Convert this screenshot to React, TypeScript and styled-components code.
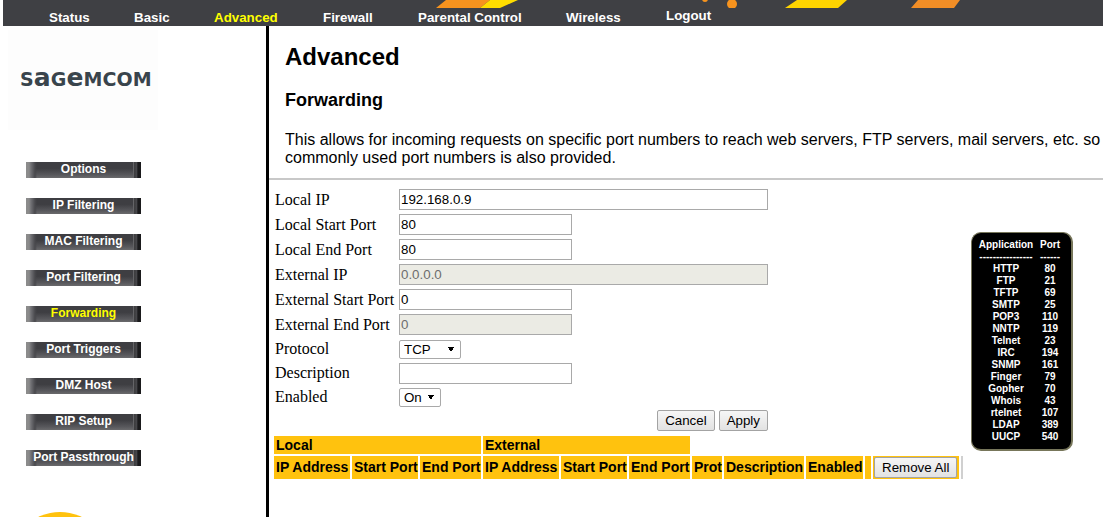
import React from "react";
import styled, { createGlobalStyle } from "styled-components";

const GlobalStyle = createGlobalStyle`
  html, body {
    margin: 0;
    padding: 0;
    background: #fff;
    overflow: hidden;
  }
`;

const Page = styled.div`
  width: 1103px;
  height: 517px;
  overflow: hidden;
  font-family: "Liberation Sans", Arial, sans-serif;
`;

const Header = styled.div`
  margin-left: 3px;
  height: 26px;
  background: #3f4044;
`;

const Banner = styled.svg`
  display: block;
  width: 1100px;
  height: 8px;
`;

const Nav = styled.nav`
  display: flex;
  height: 18px;
  padding-left: 46px;
`;

const NavItem = styled.a<{ $w: number; $active?: boolean; $raised?: boolean }>`
  width: ${(p) => p.$w}px;
  flex: none;
  font-size: 13.33px;
  font-weight: bold;
  line-height: 18px;
  white-space: nowrap;
  color: ${(p) => (p.$active ? "#ffff00" : "#fff")};
  padding-top: ${(p) => (p.$raised ? "0" : "1px")};
  margin-top: ${(p) => (p.$raised ? "-1px" : "0")};
`;

const Body = styled.div`
  display: flex;
  height: 491px;
`;

const Sidebar = styled.aside`
  width: 266px;
  flex: none;
  overflow: hidden;
  border-right: 3px solid #000;
`;

const LogoBox = styled.div`
  margin: 4px 0 0 8px;
  width: 150px;
  height: 100px;
  background: #fdfdfd;
  display: flex;
  align-items: center;
  padding-left: 12px;
  box-sizing: border-box;
`;

const LogoText = styled.div`
  font-family: "DejaVu Sans", sans-serif;
  font-size: 19px;
  font-weight: bold;
  line-height: 22px;
  color: #39444c;
  white-space: nowrap;
  margin-top: -2px;
  letter-spacing: 0.1px;
`;

const LogoLower = styled.span`
  font-size: 25px;
  line-height: 0;
`;

const Menu = styled.ul`
  list-style: none;
  margin: 32px 0 0 26px;
  padding: 0;
  display: flex;
  flex-direction: column;
  gap: 20px;
`;

const MenuButton = styled.li<{ $active?: boolean }>`
  width: 115px;
  height: 16px;
  font-size: 12px;
  font-weight: bold;
  line-height: 15px;
  text-align: center;
  white-space: nowrap;
  color: ${(p) => (p.$active ? "#ffff00" : "#fff")};
  background:
    linear-gradient(90deg, #8c8c8c 0, #8a8a8a 3px, #707074 5px, #48484c 9px, transparent 11px) left / 12px 100% no-repeat,
    linear-gradient(90deg, #77777a 0, #2b2b2d 2px, #56565a 3px, #1a1a1c 5px) right / 8px 100% no-repeat,
    linear-gradient(180deg, #3e3e42 0, #3e3e42 40%, #58585c 80%, #6a6a6c 100%);
`;

const Sun = styled.svg`
  display: block;
  margin: 46px 0 0 26px;
  width: 68px;
  height: 6px;
`;

const Main = styled.main`
  flex: 1;
  min-width: 0;
  overflow: hidden;
`;

const Intro = styled.div`
  padding: 17px 0 0 16px;
`;

const H1 = styled.h1`
  margin: 0;
  font-size: 24px;
  font-weight: bold;
  line-height: 28px;
  color: #000;
`;

const H2 = styled.h2`
  margin: 19px 0 0;
  font-size: 18px;
  font-weight: bold;
  line-height: 21px;
  color: #000;
`;

const Para = styled.p`
  margin: 20px 0 0;
  width: 1300px;
  font-size: 16px;
  line-height: 18px;
  color: #000;
`;

const Rule = styled.hr`
  margin: 11px 0 0;
  height: 2px;
  border: 0;
  background: #c8c8c8;
`;

const Workspace = styled.div`
  display: flex;
  align-items: flex-start;
  padding-left: 3px;
`;

const LeftColumn = styled.div`
  width: 699px;
  flex: none;
`;

const Form = styled.form`
  width: 493px;
  padding: 7px 0 0 3px;
`;

const Row = styled.div<{ $h?: number }>`
  display: grid;
  grid-template-columns: 124px 1fr;
  align-items: center;
  height: ${(p) => p.$h ?? 25}px;
`;

const Label = styled.label`
  font-family: "Liberation Serif", "Times New Roman", serif;
  font-size: 16px;
  color: #000;
  white-space: nowrap;
`;

const Field = styled.input<{ $wide?: boolean }>`
  box-sizing: border-box;
  display: block;
  width: ${(p) => (p.$wide ? 369 : 173)}px;
  height: 21px;
  padding: 0 1px;
  border: 1px solid #a9a9a9;
  font-family: "Liberation Sans", Arial, sans-serif;
  font-size: 13.33px;
  color: #000;
  background: #fff;
  &:disabled {
    background: #ebebe4;
    color: #6d6d6d;
  }
`;

const Pick = styled.select<{ $w: number }>`
  box-sizing: border-box;
  display: block;
  appearance: none;
  width: ${(p) => p.$w}px;
  height: 19px;
  padding: 0 0 0 4px;
  border: 1px solid #a9a9a9;
  border-radius: 2px;
  font-family: "Liberation Sans", Arial, sans-serif;
  font-size: 13.33px;
  color: #000;
  background-color: #fff;
  background-image:
    linear-gradient(to top right, transparent 50%, #000 50%),
    linear-gradient(to top left, transparent 50%, #000 50%);
  background-size: 3px 5px, 3px 5px;
  background-position: right 9px center, right 6px center;
  background-repeat: no-repeat;
`;

const Actions = styled.div`
  display: flex;
  justify-content: flex-end;
  gap: 4px;
  margin-top: 1px;
`;

const Btn = styled.button`
  box-sizing: border-box;
  height: 21px;
  padding: 0 7px;
  border: 1px solid #a3a3a3;
  border-radius: 2px;
  background: linear-gradient(180deg, #f6f6f6, #e2e2e2);
  font-family: "Liberation Sans", Arial, sans-serif;
  font-size: 13.33px;
  color: #000;
`;

const PortPanel = styled.div`
  box-sizing: border-box;
  width: 102px;
  height: 219px;
  margin-top: 52px;
  flex: none;
  padding: 6px 0 0;
  background: #000;
  border: 1px solid #77765a;
  border-bottom-width: 2px;
  border-right-width: 2px;
  border-radius: 10px;
  color: #fff;
  font-size: 10px;
  font-weight: bold;
  line-height: 12px;
`;

const PortRow = styled.div`
  display: grid;
  grid-template-columns: 68px 20px;
  text-align: center;
  white-space: nowrap;
`;

const Rules = styled.table`
  border-collapse: separate;
  border-spacing: 2px;
  margin-top: 3px;
  font-size: 14px;
  font-weight: bold;
  color: #000;
`;

const Cell = styled.td<{ $w?: number }>`
  background: #ffc20e;
  padding: 1px 0 1px 2px;
  line-height: 16px;
  white-space: nowrap;
  ${(p) => (p.$w ? `width: ${p.$w - 2}px;` : "")}
`;

const TallCell = styled(Cell)`
  height: 21px;
  padding: 0 0 2px 2px;
  vertical-align: middle;
`;

const ButtonCell = styled(TallCell)`
  padding: 1px 0 1px 1px;
  height: 21px;
`;

const GreyCell = styled.td`
  background: #d0d0d0;
  width: 1px;
  padding: 0 1px 0 0;
`;

const ports: [string, string][] = [
  ["HTTP", "80"],
  ["FTP", "21"],
  ["TFTP", "69"],
  ["SMTP", "25"],
  ["POP3", "110"],
  ["NNTP", "119"],
  ["Telnet", "23"],
  ["IRC", "194"],
  ["SNMP", "161"],
  ["Finger", "79"],
  ["Gopher", "70"],
  ["Whois", "43"],
  ["rtelnet", "107"],
  ["LDAP", "389"],
  ["UUCP", "540"],
];

const navItems = [
  { label: "Status", w: 85 },
  { label: "Basic", w: 80 },
  { label: "Advanced", w: 109, active: true },
  { label: "Firewall", w: 95 },
  { label: "Parental Control", w: 148 },
  { label: "Wireless", w: 100 },
  { label: "Logout", w: 60, raised: true },
];

const menuItems = [
  "Options",
  "IP Filtering",
  "MAC Filtering",
  "Port Filtering",
  "Forwarding",
  "Port Triggers",
  "DMZ Host",
  "RIP Setup",
  "Port Passthrough",
];

const App = () => {
  return (
    <Page>
      <GlobalStyle />
      <Header>
        <Banner viewBox="0 0 1100 8">
          <polygon points="433,8 443,0 487,0 477,8" fill="#f7931e" />
          <polygon points="477,8 487,0 515,0 497,8" fill="#ffdd00" />
          <circle cx="729" cy="4" r="5" fill="#f7931e" />
          <circle cx="702" cy="-1" r="3" fill="#f7931e" />
          <polygon points="782,8 794,0 844,0 835,8" fill="#ffd400" />
          <polygon points="908,8 915,0 957,0 951,8" fill="#f28e26" />
        </Banner>
        <Nav>
          {navItems.map((n) => (
            <NavItem key={n.label} $w={n.w} $active={n.active} $raised={n.raised}>
              {n.label}
            </NavItem>
          ))}
        </Nav>
      </Header>
      <Body>
        <Sidebar>
          <LogoBox>
            <LogoText>
              S<LogoLower>a</LogoLower>G<LogoLower>e</LogoLower>MCOM
            </LogoText>
          </LogoBox>
          <Menu>
            {menuItems.map((m) => (
              <MenuButton key={m} $active={m === "Forwarding"}>
                {m}
              </MenuButton>
            ))}
          </Menu>
          <Sun viewBox="0 0 68 6">
            <circle cx="34" cy="50" r="50" fill="#ffc20e" />
          </Sun>
        </Sidebar>
        <Main>
          <Intro>
            <H1>Advanced</H1>
            <H2>Forwarding</H2>
            <Para>
              This allows for incoming requests on specific port numbers to reach web servers, FTP servers, mail
              servers, etc. so they can be accessible from the public internet. A table of commonly used port numbers
              is also provided.
            </Para>
          </Intro>
          <Rule />
          <Workspace>
            <LeftColumn>
              <Form>
                <Row>
                  <Label>Local IP</Label>
                  <Field $wide defaultValue="192.168.0.9" />
                </Row>
                <Row>
                  <Label>Local Start Port</Label>
                  <Field defaultValue="80" />
                </Row>
                <Row>
                  <Label>Local End Port</Label>
                  <Field defaultValue="80" />
                </Row>
                <Row>
                  <Label>External IP</Label>
                  <Field $wide disabled defaultValue="0.0.0.0" />
                </Row>
                <Row>
                  <Label>External Start Port</Label>
                  <Field defaultValue="0" />
                </Row>
                <Row>
                  <Label>External End Port</Label>
                  <Field disabled defaultValue="0" />
                </Row>
                <Row $h={24}>
                  <Label>Protocol</Label>
                  <Pick $w={62} defaultValue="TCP">
                    <option>TCP</option>
                    <option>UDP</option>
                  </Pick>
                </Row>
                <Row $h={24}>
                  <Label>Description</Label>
                  <Field />
                </Row>
                <Row $h={24}>
                  <Label>Enabled</Label>
                  <Pick $w={42} defaultValue="On">
                    <option>On</option>
                    <option>Off</option>
                  </Pick>
                </Row>
                <Actions>
                  <Btn type="button">Cancel</Btn>
                  <Btn type="button">Apply</Btn>
                </Actions>
              </Form>
              <Rules>
                <tbody>
                  <tr>
                    <Cell colSpan={3}>Local</Cell>
                    <Cell colSpan={3}>External</Cell>
                  </tr>
                  <tr>
                    <TallCell $w={76}>IP Address</TallCell>
                    <TallCell $w={66}>Start Port</TallCell>
                    <TallCell $w={61}>End Port</TallCell>
                    <TallCell $w={76}>IP Address</TallCell>
                    <TallCell $w={66}>Start Port</TallCell>
                    <TallCell $w={61}>End Port</TallCell>
                    <TallCell $w={30}>Prot</TallCell>
                    <TallCell $w={80}>Description</TallCell>
                    <TallCell $w={57}>Enabled</TallCell>
                    <TallCell $w={6} />
                    <ButtonCell $w={87}>
                      <Btn type="button">Remove All</Btn>
                    </ButtonCell>
                    <GreyCell />
                  </tr>
                </tbody>
              </Rules>
            </LeftColumn>
            <PortPanel>
              <PortRow>
                <span>Application</span>
                <span>Port</span>
              </PortRow>
              <PortRow>
                <span>----------------</span>
                <span>------</span>
              </PortRow>
              {ports.map(([app, port]) => (
                <PortRow key={app}>
                  <span>{app}</span>
                  <span>{port}</span>
                </PortRow>
              ))}
            </PortPanel>
          </Workspace>
        </Main>
      </Body>
    </Page>
  );
};

export default App;
